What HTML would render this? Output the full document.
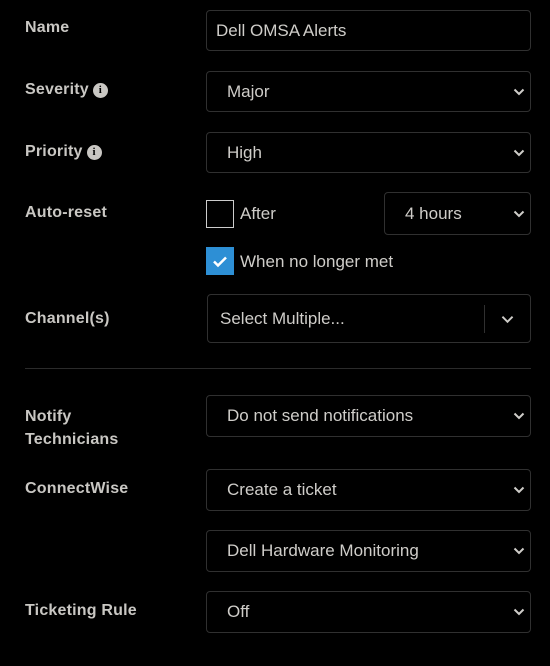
<!DOCTYPE html><html><head><style>
body{margin:0;width:550px;height:666px;background:#000;font-family:"Liberation Sans",sans-serif;color:#cfcdc9;position:relative;overflow:hidden}
.l{position:absolute;left:25px;font-weight:bold;font-size:16px;letter-spacing:0.2px;color:#c9c7c3}
.b{position:absolute;box-sizing:border-box;border:1px solid #303030;border-radius:4px;font-size:17px;color:#cfcdc9}
.b span{position:absolute;top:50%;transform:translateY(-50%);left:20px}
.c{position:absolute;right:4px;top:50%;transform:translateY(-50%)}
.i{display:inline-block;width:15px;height:15px;border-radius:50%;background:#c9c7c3;color:#000;font-size:11px;text-align:center;line-height:15px;vertical-align:1px;margin-left:4px;font-family:"Liberation Serif",serif;font-weight:bold}
.t{position:absolute;font-size:17px}
</style></head><body>
<svg width="0" height="0" style="position:absolute"><defs><symbol id="ch" viewBox="0 0 12 8"><path d="M1.5 1.5L6 6 10.5 1.5" fill="none" stroke="#cfcdc9" stroke-width="2"/></symbol></defs></svg>
<div class="l" style="top:19px">Name</div>
<div class="b" style="left:206px;top:10px;width:325px;height:41px"><span style="left:9px">Dell OMSA Alerts</span></div>
<div class="l" style="top:81px">Severity<span class="i">i</span></div>
<div class="b" style="left:206px;top:71px;width:325px;height:41px"><span>Major</span><svg class="c" width="12" height="8" style="right:5px"><use href="#ch"/></svg></div>
<div class="l" style="top:143px">Priority<span class="i">i</span></div>
<div class="b" style="left:206px;top:132px;width:325px;height:41px"><span>High</span><svg class="c" width="12" height="8" style="right:5px"><use href="#ch"/></svg></div>
<div class="l" style="top:204px">Auto-reset</div>
<div style="position:absolute;left:206px;top:200px;width:28px;height:28px;box-sizing:border-box;border:1px solid #ccc"></div>
<div class="t" style="left:240px;top:204px">After</div>
<div class="b" style="left:384px;top:192px;width:147px;height:43px"><span>4 hours</span><svg class="c" width="12" height="8" style="right:5px"><use href="#ch"/></svg></div>
<div style="position:absolute;left:206px;top:247px;width:28px;height:28px;background:#2d8fd5"><svg width="28" height="28"><path d="M8 14.5l4 4 8-8" fill="none" stroke="#fff" stroke-width="2.5"/></svg></div>
<div class="t" style="left:240px;top:252px">When no longer met</div>
<div class="l" style="top:310px">Channel(s)</div>
<div class="b" style="left:207px;top:294px;width:324px;height:49px"><span style="left:12px">Select Multiple...</span><div style="position:absolute;left:276px;top:10px;width:1px;height:28px;background:#303030"></div><svg style="position:absolute;right:15px;top:20px" width="15" height="9" viewBox="0 0 12 8"><path d="M1.5 1.5L6 6 10.5 1.5" fill="none" stroke="#cfcdc9" stroke-width="1.7"/></svg></div>
<div style="position:absolute;left:25px;top:368px;width:506px;height:1px;background:#2b2b2b"></div>
<div class="l" style="top:405px;line-height:23px">Notify<br>Technicians</div>
<div class="b" style="left:206px;top:395px;width:325px;height:42px"><span>Do not send notifications</span><svg class="c" width="12" height="8" style="right:5px"><use href="#ch"/></svg></div>
<div class="l" style="top:480px">ConnectWise</div>
<div class="b" style="left:206px;top:469px;width:325px;height:42px"><span>Create a ticket</span><svg class="c" width="12" height="8" style="right:5px"><use href="#ch"/></svg></div>
<div class="b" style="left:206px;top:530px;width:325px;height:42px"><span>Dell Hardware Monitoring</span><svg class="c" width="12" height="8" style="right:5px"><use href="#ch"/></svg></div>
<div class="l" style="top:602px">Ticketing Rule</div>
<div class="b" style="left:206px;top:591px;width:325px;height:42px"><span>Off</span><svg class="c" width="12" height="8" style="right:5px"><use href="#ch"/></svg></div>
</body></html>
